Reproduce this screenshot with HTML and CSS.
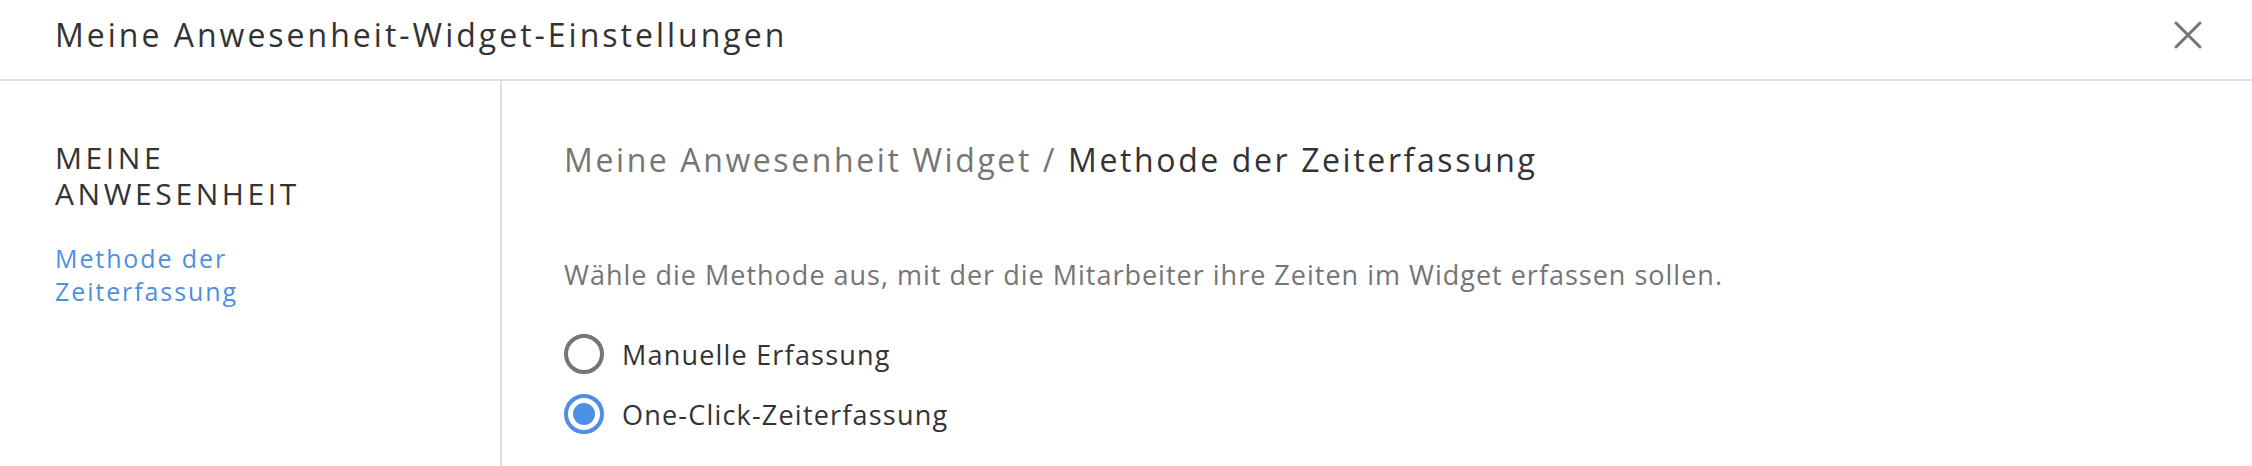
FILE: index.html
```html
<!DOCTYPE html>
<html lang="de">
<head>
    <meta charset="UTF-8">
    <meta name="viewport" content="width=device-width, initial-scale=1.0">
    <title>Meine Anwesenheit-Widget-Einstellungen</title>
    <link rel="stylesheet" href="styles.css">
</head>
<body>
    <header class="dialog-header">
        <h1 class="dialog-title">Meine Anwesenheit-Widget-Einstellungen</h1>
        <button class="close-btn" aria-label="Schließen">
            <svg viewBox="0 0 28 28" width="28" height="28">
                <path d="M2 2 L26 26 M26 2 L2 26" stroke="#757575" stroke-width="3" stroke-linecap="round" fill="none"/>
            </svg>
        </button>
    </header>

    <div class="dialog-body">
        <aside class="sidebar">
            <h2 class="sidebar-title"><span>MEINE</span><span>ANWESENHEIT</span></h2>
            <a class="sidebar-link" href="#methode">Methode der Zeiterfassung</a>
        </aside>

        <main class="content">
            <h2 class="breadcrumb"><span class="crumb-parent">Meine Anwesenheit Widget /</span> Methode der Zeiterfassung</h2>
            <p class="description">Wähle die Methode aus, mit der die Mitarbeiter ihre Zeiten im Widget erfassen sollen.</p>

            <div class="radio-group">
                <label class="radio-row">
                    <input type="radio" name="method" value="manual">
                    <span class="radio-mark"></span>
                    <span class="radio-label">Manuelle Erfassung</span>
                </label>
                <label class="radio-row">
                    <input type="radio" name="method" value="oneclick" checked>
                    <span class="radio-mark"></span>
                    <span class="radio-label">One-Click-Zeiterfassung</span>
                </label>
            </div>
        </main>
    </div>
</body>
</html>
```

FILE: styles.css
```css
html, body {
    height: 100%;
}
body {
    font-family: 'Open Sans', sans-serif;
    color: #333;
    margin: 0;
    padding: 0;
    background-color: #ffffff;
    display: flex;
    flex-direction: column;
}
.dialog-header {
    display: flex;
    align-items: center;
    justify-content: space-between;
    height: 81px;
    box-sizing: border-box;
    padding: 16px 50px 25px 55px;
    border-bottom: 2px solid #dedede;
}
.dialog-title {
    margin: 0;
    font-size: 32px;
    font-weight: 400;
    line-height: 40px;
    letter-spacing: 3px;
    color: #333;
}
.close-btn {
    width: 28px;
    height: 28px;
    padding: 0;
    border: 0;
    background: none;
    display: flex;
}
.dialog-body {
    flex: 1;
    display: flex;
}
.sidebar {
    width: 502px;
    box-sizing: border-box;
    padding: 59px 40px 0 55px;
    border-right: 2px solid #dedede;
}
.sidebar-title {
    margin: 0;
    font-size: 30px;
    font-weight: 400;
    line-height: 36px;
    letter-spacing: 3.6px;
    color: #333;
}
.sidebar-title span {
    display: block;
}
.sidebar-link {
    display: block;
    width: 240px;
    margin-top: 30px;
    font-size: 25px;
    line-height: 33px;
    letter-spacing: 1.9px;
    color: #4f8fe3;
    text-decoration: none;
}
.content {
    flex: 1;
    padding: 59px 60px 0 62px;
}
.breadcrumb {
    margin: 0;
    font-size: 32px;
    font-weight: 400;
    line-height: 40px;
    letter-spacing: 2.6px;
    color: #333;
}
.crumb-parent {
    color: #757575;
}
.description {
    margin: 77px 0 0 0;
    font-size: 27px;
    line-height: 36px;
    letter-spacing: 1px;
    color: #757575;
}
.radio-group {
    margin-top: 41px;
    display: flex;
    flex-direction: column;
    gap: 20px;
}
.radio-row {
    display: flex;
    align-items: center;
    gap: 18px;
    height: 40px;
    cursor: pointer;
}
.radio-row input {
    display: none;
}
.radio-mark {
    width: 40px;
    height: 40px;
    box-sizing: border-box;
    border: 4px solid #757575;
    border-radius: 50%;
    display: flex;
    align-items: center;
    justify-content: center;
}
.radio-row input:checked + .radio-mark {
    border-color: #4f8fe3;
}
.radio-row input:checked + .radio-mark::after {
    content: "";
    width: 22px;
    height: 22px;
    border-radius: 50%;
    background: #4f8fe3;
}
.radio-label {
    font-size: 27px;
    letter-spacing: 1.2px;
    color: #333;
}
```
